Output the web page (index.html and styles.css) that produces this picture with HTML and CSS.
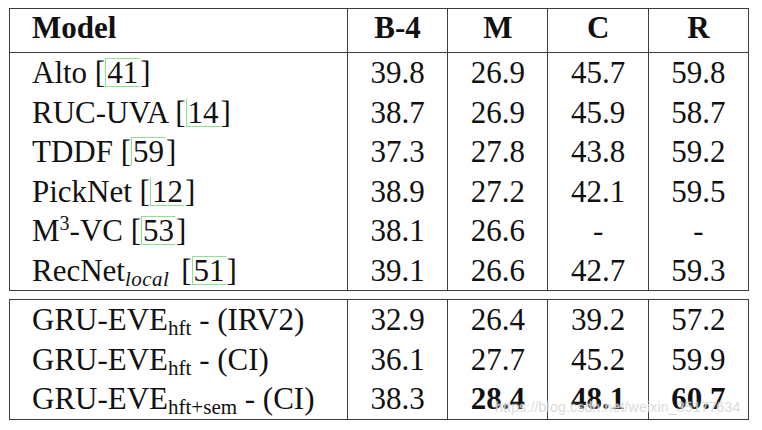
FILE: index.html
```html
<!DOCTYPE html>
<html lang="en">
<head>
    <meta charset="UTF-8">
    <title>Video captioning results</title>
    <link rel="stylesheet" href="styles.css">
</head>
<body>

<div class="page">
    <!-- Baseline methods -->
    <table class="results">
        <colgroup>
            <col class="col-model"><col class="col-num"><col class="col-num"><col class="col-num"><col class="col-num">
        </colgroup>
        <tr class="head">
            <th class="model">Model</th><th>B-4</th><th>M</th><th>C</th><th>R</th>
        </tr>
        <tr>
            <td class="model">Alto [<span class="cite c-lb c-t">41</span>]</td><td>39.8</td><td>26.9</td><td>45.7</td><td>59.8</td>
        </tr>
        <tr>
            <td class="model">RUC-UVA [<span class="cite c-lb">14</span>]</td><td>38.7</td><td>26.9</td><td>45.9</td><td>58.7</td>
        </tr>
        <tr>
            <td class="model">TDDF [<span class="cite c-t c-l">59</span>]</td><td>37.3</td><td>27.8</td><td>43.8</td><td>59.2</td>
        </tr>
        <tr>
            <td class="model">PickNet [<span class="cite c-lb">12</span>]</td><td>38.9</td><td>27.2</td><td>42.1</td><td>59.5</td>
        </tr>
        <tr>
            <td class="model">M<sup>3</sup>-VC [<span class="cite c-lb c-t">53</span>]</td><td>38.1</td><td>26.6</td><td>-</td><td>-</td>
        </tr>
        <tr>
            <td class="model">RecNet<span class="sub-math">local</span> [<span class="cite c-lb c-t">51</span>]</td><td>39.1</td><td>26.6</td><td>42.7</td><td>59.3</td>
        </tr>
    </table>

    <!-- Our variants -->
    <table class="results">
        <colgroup>
            <col class="col-model"><col class="col-num"><col class="col-num"><col class="col-num"><col class="col-num">
        </colgroup>
        <tr>
            <td class="model">GRU-EVE<span class="sub">hft</span> - (IRV2)</td><td>32.9</td><td>26.4</td><td>39.2</td><td>57.2</td>
        </tr>
        <tr>
            <td class="model">GRU-EVE<span class="sub">hft</span> - (CI)</td><td>36.1</td><td>27.7</td><td>45.2</td><td>59.9</td>
        </tr>
        <tr>
            <td class="model">GRU-EVE<span class="sub">hft+sem</span> - (CI)</td><td>38.3</td><td class="best">28.4</td><td class="best">48.1</td><td class="best">60.7</td>
        </tr>
    </table>

    <div class="watermark">https://blog.csdn.net/weixin_35177634</div>
</div>

</body>
</html>
```

FILE: styles.css
```css
/* Page */
body {
    margin: 0;
    background: #fff;
    font-family: "Liberation Serif", "Times New Roman", serif;
    color: #111;
}

.page {
    position: relative;
    padding: 8px 0 0 9px;
    width: 740px;
}

/* Tables */
.results {
    border-collapse: collapse;
    border: 1.5px solid #3c3c3c;
    width: 740px;
    table-layout: fixed;
    font-size: 31px;
    margin-bottom: 8px;
}

.col-model {
    width: 337px;
}

.col-num {
    width: 100px;
}

.results th,
.results td {
    border-left: 1.5px solid #3c3c3c;
    border-right: 1.5px solid #3c3c3c;
    padding: 0;
    text-align: center;
    height: 39.5px;
    line-height: 31px;
    white-space: nowrap;
}

.results .head th {
    height: 40px;
    border-bottom: 1.5px solid #3c3c3c;
    font-weight: bold;
    vertical-align: top;
    padding-top: 3px;
}

.results .model {
    text-align: left;
    padding-left: 22px;
}

.best {
    font-weight: bold;
}

/* Sub / superscripts */
sup {
    font-size: 20px;
    vertical-align: 11px;
    line-height: 0;
}

.sub {
    font-size: 21px;
    vertical-align: -5px;
    line-height: 0;
}

.sub-math {
    font-size: 21px;
    font-style: italic;
    vertical-align: -5px;
    line-height: 0;
    letter-spacing: 0.5px;
    margin-right: 4px;
}

/* Citation link boxes */
.cite {
    display: inline-block;
    line-height: 27px;
    padding: 0 1px;
    border: 1px solid transparent;
}

.c-lb {
    border-left-color: #8fe08f;
    border-bottom-color: #8fe08f;
}

.c-l {
    border-left-color: #8fe08f;
}

.c-t {
    border-top-color: #8fe08f;
}

/* Watermark over the last row */
.watermark {
    position: absolute;
    left: 495px;
    top: 399px;
    font-family: "Liberation Sans", Arial, sans-serif;
    font-size: 14px;
    color: rgba(205, 205, 205, 0.75);
    text-shadow: 0 0 2px #fff;
    letter-spacing: 0.2px;
}
```
